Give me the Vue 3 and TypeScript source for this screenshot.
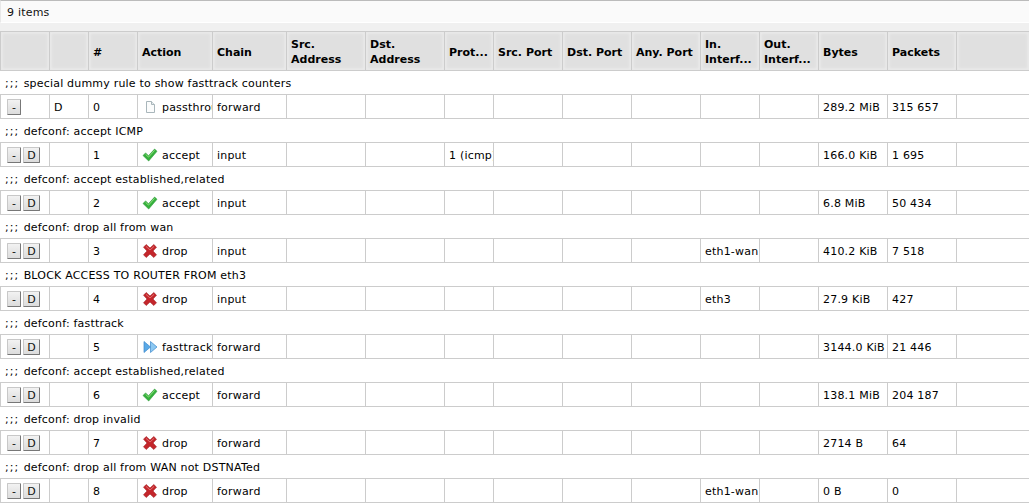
<script setup lang="ts">
interface Rule {
  comment: string
  dyn?: boolean
  num: number
  icon: 'doc' | 'ok' | 'x' | 'ff'
  action: string
  chain: string
  proto?: string
  inIf?: string
  bytes: string
  packets: string
}

const headers: string[] = ['', '', '#', 'Action', 'Chain', 'Src. Address', 'Dst. Address', 'Prot...', 'Src. Port', 'Dst. Port', 'Any. Port', 'In. Interf...', 'Out. Interf...', 'Bytes', 'Packets', '']
const widths: number[] = [49, 39, 49, 75, 74, 79, 79, 49, 69, 69, 69, 59, 59, 69, 69, 73]

const rules: Rule[] = [
  { comment: 'special dummy rule to show fasttrack counters', dyn: true, num: 0, icon: 'doc', action: 'passthrough', chain: 'forward', bytes: '289.2 MiB', packets: '315 657' },
  { comment: 'defconf: accept ICMP', num: 1, icon: 'ok', action: 'accept', chain: 'input', proto: '1 (icmp)', bytes: '166.0 KiB', packets: '1 695' },
  { comment: 'defconf: accept established,related', num: 2, icon: 'ok', action: 'accept', chain: 'input', bytes: '6.8 MiB', packets: '50 434' },
  { comment: 'defconf: drop all from wan', num: 3, icon: 'x', action: 'drop', chain: 'input', inIf: 'eth1-wan', bytes: '410.2 KiB', packets: '7 518' },
  { comment: 'BLOCK ACCESS TO ROUTER FROM eth3', num: 4, icon: 'x', action: 'drop', chain: 'input', inIf: 'eth3', bytes: '27.9 KiB', packets: '427' },
  { comment: 'defconf: fasttrack', num: 5, icon: 'ff', action: 'fasttrack', chain: 'forward', bytes: '3144.0 KiB', packets: '21 446' },
  { comment: 'defconf: accept established,related', num: 6, icon: 'ok', action: 'accept', chain: 'forward', bytes: '138.1 MiB', packets: '204 187' },
  { comment: 'defconf: drop invalid', num: 7, icon: 'x', action: 'drop', chain: 'forward', bytes: '2714 B', packets: '64' },
  { comment: 'defconf: drop all from WAN not DSTNATed', num: 8, icon: 'x', action: 'drop', chain: 'forward', inIf: 'eth1-wan', bytes: '0 B', packets: '0' },
]
</script>

<template>
  <div class="page">
    <div class="toolbar">9 items</div>
    <div class="strip"></div>
    <table class="grid">
      <colgroup>
        <col v-for="(w, i) in widths" :key="i" :style="{ width: w + 'px' }" />
      </colgroup>
      <thead>
        <tr>
          <th v-for="(h, i) in headers" :key="i"><div class="th-in">{{ h }}</div></th>
        </tr>
      </thead>
      <tbody>
        <template v-for="r in rules" :key="r.num">
          <tr class="comment">
            <td colspan="16"><div class="clip"><span class="semi">;;; </span>{{ r.comment }}</div></td>
          </tr>
          <tr class="data">
            <td class="ctl">
              <div class="btns">
                <button class="btn minus" type="button">-</button>
                <button v-if="!r.dyn" class="btn dis" type="button">D</button>
              </div>
            </td>
            <td><div class="clip flag">{{ r.dyn ? 'D' : '' }}</div></td>
            <td><div class="clip">{{ r.num }}</div></td>
            <td>
              <div class="clip act">
                <svg v-if="r.icon === 'doc'" class="ico" viewBox="0 0 16 16">
                  <path d="M4.5 2.5h5l3 3v8h-8z" fill="#fbfcfc" stroke="#a9b6bb" />
                  <path d="M9.5 2.5v3h3" fill="#e6ecee" stroke="#a9b6bb" />
                </svg>
                <svg v-else-if="r.icon === 'ok'" class="ico" viewBox="0 0 16 16">
                  <path d="M1 8.5l2.6-2.6 2.9 2.8L12.6 2 15 4.3 6.7 14z" fill="#35b03c" stroke="#2a9a38" stroke-width=".6" />
                  <path d="M3.5 7.2l3 2.9L12.6 3.4" fill="none" stroke="#8fe07c" stroke-width="1" />
                </svg>
                <svg v-else-if="r.icon === 'x'" class="ico" viewBox="0 0 16 16">
                  <path d="M1.5 4.2L4.2 1.5 8 5l3.8-3.5 2.7 2.7L11 8l3.5 3.8-2.7 2.7L8 11l-3.8 3.5-2.7-2.7L5 8z" fill="#c4262b" stroke="#a32126" stroke-width=".6" />
                  <path d="M4 3.4L8 7l4-3.6" fill="none" stroke="#e57a7a" stroke-width=".9" />
                </svg>
                <svg v-else class="ico" viewBox="0 0 16 16">
                  <path d="M2 2.5l6.5 5.5L2 13.5z" fill="#5aa9e6" stroke="#3b88cc" stroke-width=".7" />
                  <path d="M8.5 2.5L15 8l-6.5 5.5z" fill="#8cc8f2" stroke="#3b88cc" stroke-width=".7" />
                </svg>
                <span>{{ r.action }}</span>
              </div>
            </td>
            <td><div class="clip">{{ r.chain }}</div></td>
            <td></td>
            <td></td>
            <td><div class="clip">{{ r.proto }}</div></td>
            <td></td>
            <td></td>
            <td></td>
            <td><div class="clip">{{ r.inIf }}</div></td>
            <td></td>
            <td><div class="clip">{{ r.bytes }}</div></td>
            <td><div class="clip">{{ r.packets }}</div></td>
            <td></td>
          </tr>
        </template>
      </tbody>
    </table>
  </div>
</template>

<style>
html, body { margin: 0; background: #fff; overflow: hidden; }
</style>

<style scoped>
.page {
  width: 1029px;
  height: 503px;
  overflow: hidden;
  font-family: "DejaVu Sans", sans-serif;
  font-size: 11px;
  letter-spacing: 0.2px;
  color: #000;
  background: #fff;
}
.toolbar {
  height: 21px;
  line-height: 23px;
  padding-left: 6px;
  background: #fafafa;
  border-top: 1px solid #bbb;
  border-bottom: 1px solid #fff;
  border-left: 1px solid #e8e8e8;
  box-sizing: content-box;
  color: #111;
}
.strip { height: 8px; background: #f0f0f0; }
.grid {
  table-layout: fixed;
  width: 1029px;
  border-collapse: separate;
  border-spacing: 0;
}
th {
  height: 38px;
  padding: 0;
  border-top: 1px solid #ccc;
  border-bottom: 1px solid #ccc;
  border-left: 1px solid #ccc;
  background: #e8e8e8;
  text-align: left;
  font-weight: bold;
  letter-spacing: 0;
  line-height: 15px;
  overflow: hidden;
}
.th-in {
  box-sizing: border-box;
  height: 38px;
  margin: 0;
  padding: 2px 3px 0;
  display: flex;
  align-items: center;
  background: #e0e0e0;
  box-shadow: inset 0 0 3px #f0f0f0;
  border: 1px solid #e8e8e8;
  white-space: normal;
}
td {
  padding: 0;
  height: 23px;
  border-bottom: 1px solid #ccc;
  border-left: 1px solid #ccc;
  overflow: hidden;
  white-space: nowrap;
}
.comment td { border-left: 0; }
.clip {
  box-sizing: border-box;
  overflow: hidden;
  padding-left: 4px;
  padding-top: 1px;
  height: 23px;
  line-height: 23px;
  white-space: nowrap;
  color: #000;
}
.comment .clip { padding-left: 5px; }
.semi { letter-spacing: 1px; }
.flag { padding-left: 4px; }
.btns { display: flex; gap: 2px; padding: 4px 0 0 6px; height: 19px; }
.btn {
  box-sizing: border-box;
  height: 16px;
  padding: 0;
  margin: 0;
  font: 11px/13px "DejaVu Sans", sans-serif;
  color: #111;
  background: linear-gradient(#f2f2f2, #dcdcdc);
  border: 1px solid #c8c8c8;
  border-right-color: #777;
  border-bottom-color: #777;
  border-radius: 1px;
}
.minus { width: 14px; }
.dis { width: 17px; }
.act { display: flex; align-items: center; padding-left: 4px; }
.ico { width: 16px; height: 16px; flex: none; margin-right: 4px; margin-top: -1px; }
</style>
